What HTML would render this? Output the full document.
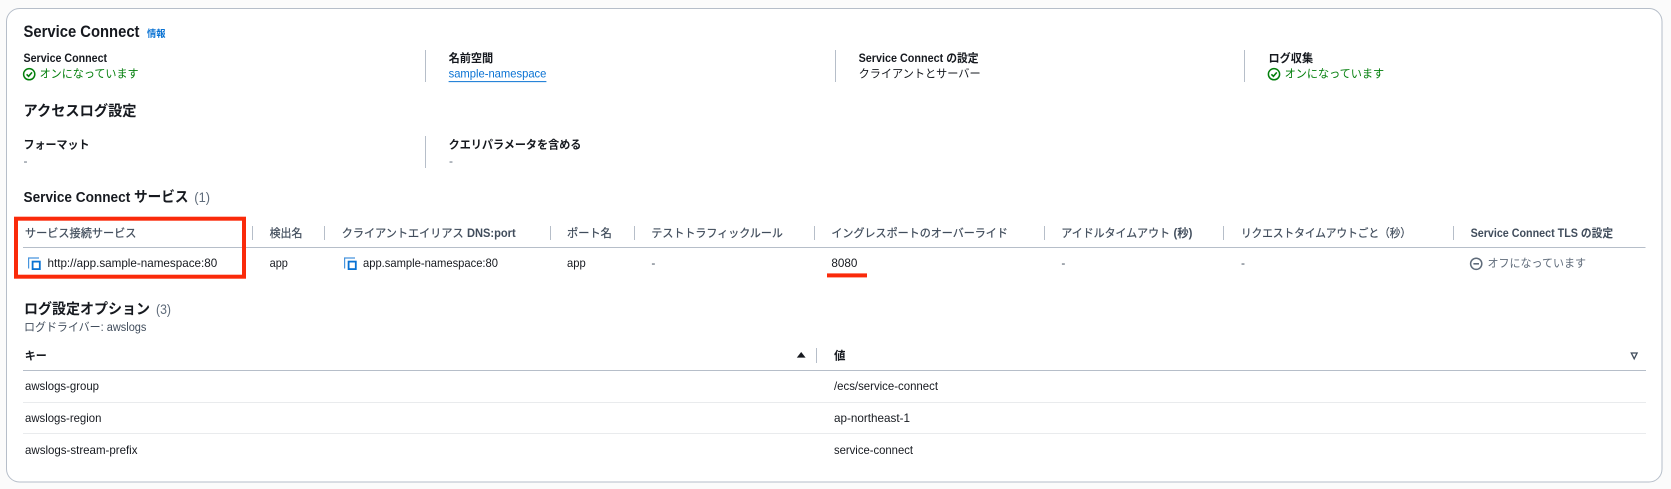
<!DOCTYPE html>
<html lang="ja">
<head>
<meta charset="utf-8">
<title>Service Connect</title>
<style>
html,body{margin:0;padding:0;width:1671px;height:489px;overflow:hidden;background:#fbfbfb}
svg{display:block;filter:blur(.3px)}
text{font-family:"Liberation Sans","Noto Sans CJK JP",sans-serif;fill:#16191f;font-size:12px;white-space:pre}
.h1{font-size:16.5px;font-weight:700}
.h2{font-size:14.5px;font-weight:700}
.l{font-size:11.5px;font-weight:700}
.th{font-size:11.5px;font-weight:700;fill:#414d5c}
.tr{font-size:11.5px;fill:#414d5c;stroke:#414d5c;stroke-width:.22px}
.g{fill:#037f0c}
.b{fill:#0972d3}
.m{fill:#5f6b7a}
.c{fill:#414d5c}
</style>
</head>
<body>
<svg width="1671" height="489" viewBox="0 0 1671 489" xmlns="http://www.w3.org/2000/svg">
<rect x="-2" y="-2" width="1675" height="493" fill="#fbfbfb"/>
<rect x="6.5" y="8.5" width="1655.5" height="473.5" rx="13" fill="#fff" stroke="#b6bec9" stroke-width="1"/>

<text class="h1" x="23.5" y="37.2" textLength="116" lengthAdjust="spacingAndGlyphs">Service Connect</text>
<text class="b" style="font-size:9.5px;font-weight:700" x="147" y="37" textLength="18.6" lengthAdjust="spacingAndGlyphs">情報</text>

<g stroke="#b6bec9" stroke-width="1">
<line x1="425.5" y1="50" x2="425.5" y2="82"/>
<line x1="835.5" y1="50" x2="835.5" y2="82"/>
<line x1="1244.5" y1="50" x2="1244.5" y2="82"/>
<line x1="425.5" y1="136" x2="425.5" y2="168"/>
<line x1="252.5" y1="226" x2="252.5" y2="240"/>
<line x1="324.5" y1="226" x2="324.5" y2="240"/>
<line x1="550.5" y1="226" x2="550.5" y2="240"/>
<line x1="634.5" y1="226" x2="634.5" y2="240"/>
<line x1="814.5" y1="226" x2="814.5" y2="240"/>
<line x1="1044.5" y1="226" x2="1044.5" y2="240"/>
<line x1="1223.5" y1="226" x2="1223.5" y2="240"/>
<line x1="1453.5" y1="226" x2="1453.5" y2="240"/>
<line x1="816.5" y1="348" x2="816.5" y2="363"/>
</g>

<text class="l" x="23.5" y="62" textLength="83.6" lengthAdjust="spacingAndGlyphs">Service Connect</text>
<circle cx="29.2" cy="74.2" r="5.6" fill="none" stroke="#037f0c" stroke-width="1.5"/>
<path d="M26.6 74.3l2 2 3.4-3.9" fill="none" stroke="#037f0c" stroke-width="1.6"/>
<text class="g" style="font-size:11.5px" x="39.6" y="77.5" textLength="99" lengthAdjust="spacingAndGlyphs">オンになっています</text>

<text class="l" x="448.6" y="62.2" textLength="44.6" lengthAdjust="spacingAndGlyphs">名前空間</text>
<text class="b" x="448.6" y="77.7" textLength="97.8" lengthAdjust="spacingAndGlyphs">sample-namespace</text>
<line x1="448.6" y1="81.6" x2="546.4" y2="81.6" stroke="#0972d3" stroke-width="1"/>

<text class="l" x="858.6" y="62.2" textLength="120" lengthAdjust="spacingAndGlyphs">Service Connect の設定</text>
<text style="font-size:11.5px" x="858.6" y="77.5" textLength="122" lengthAdjust="spacingAndGlyphs">クライアントとサーバー</text>

<text class="l" x="1268.5" y="62.2" textLength="44.6" lengthAdjust="spacingAndGlyphs">ログ収集</text>
<circle cx="1274" cy="74.2" r="5.6" fill="none" stroke="#037f0c" stroke-width="1.5"/>
<path d="M1271.4 74.3l2 2 3.4-3.9" fill="none" stroke="#037f0c" stroke-width="1.6"/>
<text class="g" style="font-size:11.5px" x="1284.6" y="77.5" textLength="99.6" lengthAdjust="spacingAndGlyphs">オンになっています</text>

<text class="h2" x="23.5" y="116" textLength="113" lengthAdjust="spacingAndGlyphs">アクセスログ設定</text>

<text class="l" x="23.5" y="148.5" textLength="66" lengthAdjust="spacingAndGlyphs">フォーマット</text>
<text class="m" x="23.5" y="165">-</text>
<text class="l" x="448.6" y="148.5" textLength="132.8" lengthAdjust="spacingAndGlyphs">クエリパラメータを含める</text>
<text class="m" x="449" y="165">-</text>

<text class="h2" x="23.5" y="202" textLength="165" lengthAdjust="spacingAndGlyphs">Service Connect サービス</text>
<text class="m" style="font-size:14px" x="194.3" y="202" textLength="15.7" lengthAdjust="spacingAndGlyphs">(1)</text>

<line x1="23" y1="247.5" x2="1645.5" y2="247.5" stroke="#b6bec9" stroke-width="1"/>

<text class="tr" x="25" y="237" textLength="111.4" lengthAdjust="spacingAndGlyphs">サービス接続サービス</text>
<text class="tr" x="269.6" y="237" textLength="32.9" lengthAdjust="spacingAndGlyphs">検出名</text>
<text class="tr" x="341.8" y="237" textLength="121.8" lengthAdjust="spacingAndGlyphs">クライアントエイリアス</text>
<text class="th" x="467" y="237" textLength="48.7" lengthAdjust="spacingAndGlyphs">DNS:port</text>
<text class="tr" x="567" y="237" textLength="44.8" lengthAdjust="spacingAndGlyphs">ポート名</text>
<text class="tr" x="651.4" y="237" textLength="131.5" lengthAdjust="spacingAndGlyphs">テストトラフィックルール</text>
<text class="tr" x="831.4" y="237" textLength="176.5" lengthAdjust="spacingAndGlyphs">イングレスポートのオーバーライド</text>
<text class="tr" x="1061.4" y="237" textLength="108.6" lengthAdjust="spacingAndGlyphs">アイドルタイムアウト</text>
<text class="th" x="1173.5" y="237" textLength="18.9" lengthAdjust="spacingAndGlyphs">(秒)</text>
<text class="tr" x="1241" y="237" textLength="170" lengthAdjust="spacingAndGlyphs">リクエストタイムアウトごと（秒）</text>
<text class="th" x="1470.6" y="237" textLength="142.5" lengthAdjust="spacingAndGlyphs">Service Connect TLS の設定</text>

<path d="M28.6 268.5V258H39" fill="none" stroke="#0972d3" stroke-width="1.2" stroke-opacity=".75"/>
<rect x="32.6" y="261.6" width="7.2" height="7.5" fill="none" stroke="#0972d3" stroke-width="1.8"/>
<text x="47.5" y="267" textLength="169.7" lengthAdjust="spacingAndGlyphs">http://app.sample-namespace:80</text>
<text x="269.6" y="267" textLength="18.3" lengthAdjust="spacingAndGlyphs">app</text>
<path d="M344.6 268.5V258H355" fill="none" stroke="#0972d3" stroke-width="1.2" stroke-opacity=".75"/>
<rect x="348.6" y="261.6" width="7.2" height="7.5" fill="none" stroke="#0972d3" stroke-width="1.8"/>
<text x="363" y="267" textLength="135" lengthAdjust="spacingAndGlyphs">app.sample-namespace:80</text>
<text x="567" y="267" textLength="18.7" lengthAdjust="spacingAndGlyphs">app</text>
<text class="c" x="651.4" y="267">-</text>
<text x="831.4" y="267" textLength="26" lengthAdjust="spacingAndGlyphs">8080</text>
<text class="c" x="1061.4" y="267">-</text>
<text class="c" x="1241" y="267">-</text>
<circle cx="1476.2" cy="263.8" r="5.6" fill="none" stroke="#5f6b7a" stroke-width="1.5"/>
<line x1="1473.4" y1="263.8" x2="1479" y2="263.8" stroke="#5f6b7a" stroke-width="1.6"/>
<text class="m" style="font-size:11.5px" x="1487.5" y="267" textLength="98.5" lengthAdjust="spacingAndGlyphs">オフになっています</text>

<rect x="16" y="218.7" width="228" height="58" fill="none" stroke="#fa2a0a" stroke-width="4"/>
<rect x="827" y="273.4" width="40" height="4" fill="#fa2a0a"/>

<text class="h2" x="24" y="314" textLength="126" lengthAdjust="spacingAndGlyphs">ログ設定オプション</text>
<text class="m" style="font-size:14px" x="156" y="314" textLength="15" lengthAdjust="spacingAndGlyphs">(3)</text>
<text class="c" style="font-size:11.5px" x="24" y="331" textLength="122.4" lengthAdjust="spacingAndGlyphs">ログドライバー: awslogs</text>

<text class="l" x="24.7" y="359.5" textLength="22" lengthAdjust="spacingAndGlyphs">キー</text>
<path d="M796.8 357.6l4.4-5.6 4.4 5.6z" fill="#16191f"/>
<text class="l" x="834" y="359.5">値</text>
<path d="M1631.3 353h5.8l-2.9 5.8z" fill="none" stroke="#414d5c" stroke-width="1.3"/>
<line x1="23" y1="370.5" x2="1646" y2="370.5" stroke="#b6bec9" stroke-width="1"/>
<line x1="23" y1="402.5" x2="1646" y2="402.5" stroke="#e9ebed" stroke-width="1"/>
<line x1="23" y1="433.5" x2="1646" y2="433.5" stroke="#e9ebed" stroke-width="1"/>

<text x="25" y="390" textLength="74" lengthAdjust="spacingAndGlyphs">awslogs-group</text>
<text x="834" y="390" textLength="104" lengthAdjust="spacingAndGlyphs">/ecs/service-connect</text>
<text x="25" y="422" textLength="76.4" lengthAdjust="spacingAndGlyphs">awslogs-region</text>
<text x="834" y="422" textLength="76" lengthAdjust="spacingAndGlyphs">ap-northeast-1</text>
<text x="25" y="454" textLength="112.5" lengthAdjust="spacingAndGlyphs">awslogs-stream-prefix</text>
<text x="834" y="454" textLength="79" lengthAdjust="spacingAndGlyphs">service-connect</text>
</svg>
</body>
</html>
